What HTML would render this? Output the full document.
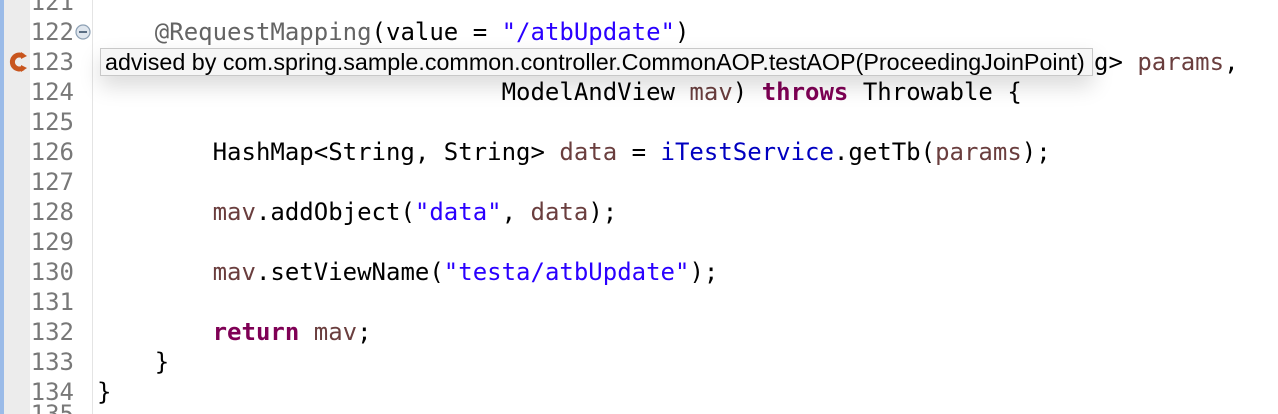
<!DOCTYPE html>
<html><head><style>
html,body{margin:0;padding:0;width:1278px;height:414px;overflow:hidden;background:#fff;position:relative}
.bar{position:absolute;left:0;top:0;width:4px;height:414px;background:#9bbbe8}
.gut{position:absolute;left:4px;top:0;width:26px;height:414px;background:#ececec}
.sep{position:absolute;left:92px;top:0;width:1px;height:414px;background:#e4e4e4}
.ln{position:absolute;left:30px;width:44px;text-align:right;font:24px/30px "DejaVu Sans Mono",monospace;color:#787878}
.c{position:absolute;left:97px;white-space:pre;font:24px/30px "DejaVu Sans Mono",monospace;color:#000}
.k{color:#7f0055;font-weight:bold}.s{color:#2a00ff}.v{color:#6a3e3e}.a{color:#646464}.f{color:#0000c0}
.tip{position:absolute;left:100px;top:48px;width:993px;height:28px;background:#f6f6f6;border:1px solid #c8c8c8;font:23.3px/27px "Liberation Sans",sans-serif;color:#000;padding-left:4px;box-sizing:border-box;box-shadow:0 10px 22px rgba(0,0,0,0.15);white-space:nowrap;overflow:hidden}
</style></head><body>
<div class="bar"></div><div class="gut"></div><div class="sep"></div>
<div class="ln" style="top:-13px">121</div>
<div class="ln" style="top:17px">122</div>
<div class="ln" style="top:47px">123</div>
<div class="ln" style="top:77px">124</div>
<div class="ln" style="top:107px">125</div>
<div class="ln" style="top:137px">126</div>
<div class="ln" style="top:167px">127</div>
<div class="ln" style="top:197px">128</div>
<div class="ln" style="top:227px">129</div>
<div class="ln" style="top:257px">130</div>
<div class="ln" style="top:287px">131</div>
<div class="ln" style="top:317px">132</div>
<div class="ln" style="top:347px">133</div>
<div class="ln" style="top:377px">134</div>
<div class="ln" style="top:404px;line-height:20px;height:10px;overflow:hidden">135</div>
<svg style="position:absolute;left:74px;top:23px" width="18" height="18"><circle cx="9" cy="9" r="7" fill="#dfe6ee" stroke="#8da0b4" stroke-width="1.2"/><rect x="5" y="8" width="8" height="2" fill="#5a6e84"/></svg>
<svg style="position:absolute;left:8px;top:50px" width="20" height="24"><path d="M15 6 A7 7 0 1 0 15 18" fill="none" stroke="#c8551e" stroke-width="5"/><path d="M13 2 l6 4 -6 3z M13 15 l6 3 -6 4z" fill="#c8551e"/></svg>
<div class="c" style="top:17px">    <span class="a">@RequestMapping</span>(value = <span class="s">"/atbUpdate"</span>)</div>
<div class="c" style="top:47px;left:1094px">g&gt; <span class="v">params</span>,</div>
<div class="c" style="top:77px">                            ModelAndView <span class="v">mav</span>) <span class="k">throws</span> Throwable {</div>
<div class="c" style="top:137px">        HashMap&lt;String, String&gt; <span class="v">data</span> = <span class="f">iTestService</span>.getTb(<span class="v">params</span>);</div>
<div class="c" style="top:197px">        <span class="v">mav</span>.addObject(<span class="s">"data"</span>, <span class="v">data</span>);</div>
<div class="c" style="top:257px">        <span class="v">mav</span>.setViewName(<span class="s">"testa/atbUpdate"</span>);</div>
<div class="c" style="top:317px">        <span class="k">return</span> <span class="v">mav</span>;</div>
<div class="c" style="top:347px">    }</div>
<div class="c" style="top:377px">}</div>
<div class="tip">advised by com.spring.sample.common.controller.CommonAOP.testAOP(ProceedingJoinPoint)</div>
</body></html>
